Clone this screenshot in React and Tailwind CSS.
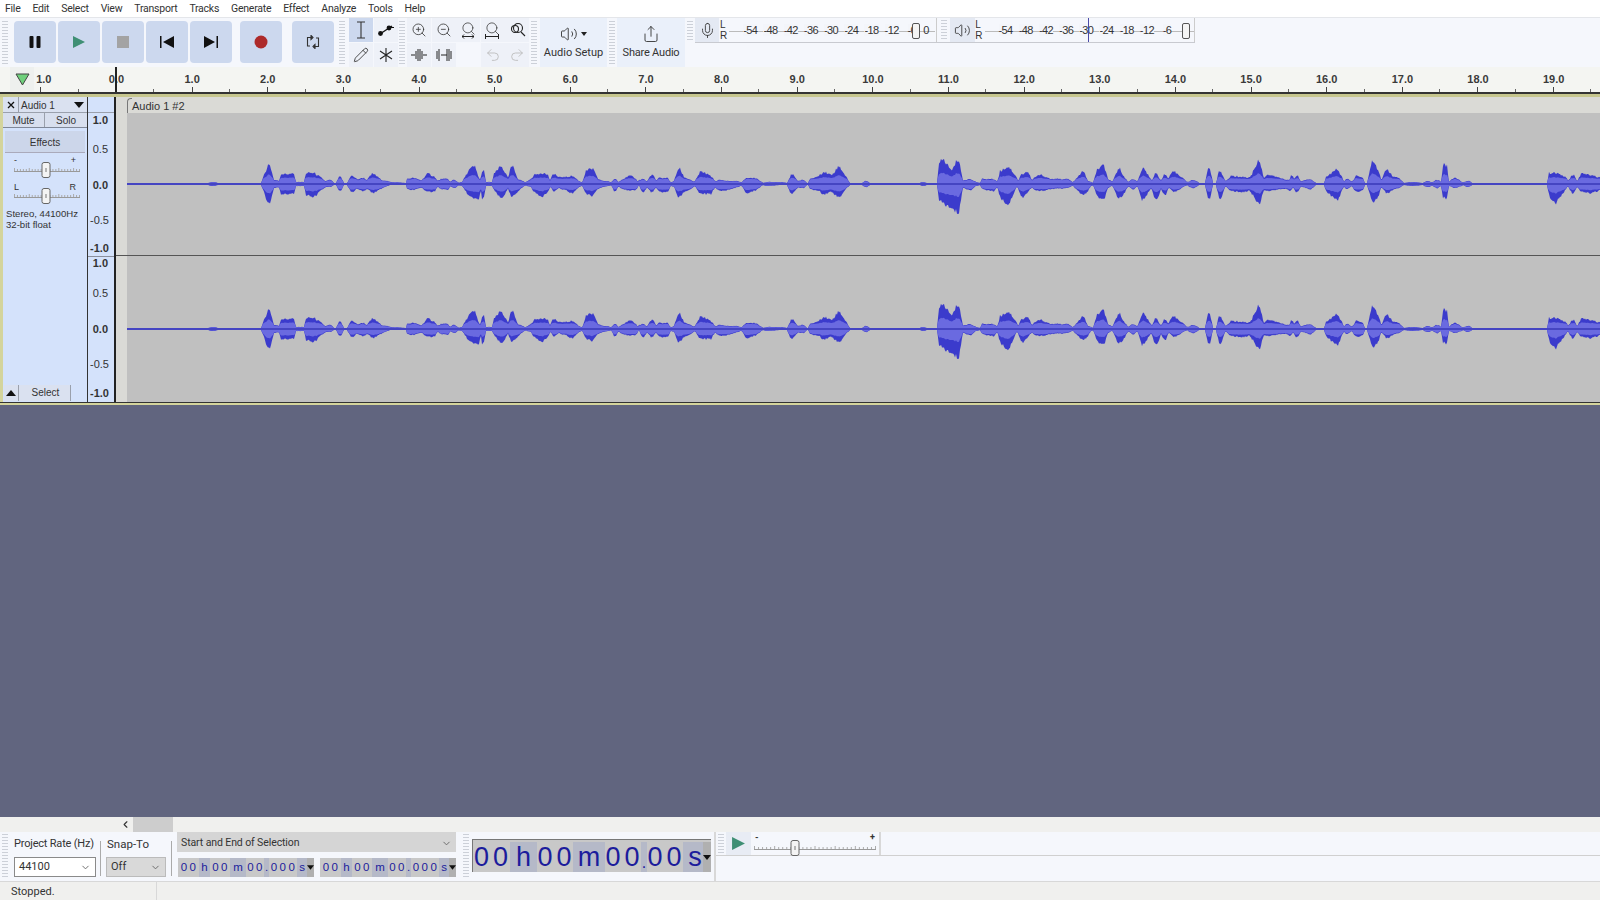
import { Mic, Volume2, Pencil, ZoomIn, ZoomOut, Search, Undo2, Redo2, ChevronDown, ChevronLeft, Share } from 'lucide-react';

const uiFont = "font-['Roboto','Liberation_Sans',sans-serif]";
const armFont = "font-['Liberation_Sans',Arial,sans-serif]";

// envelope of the recording: [x, up, down] in px from the centre line
const ENV = [
  [127,1,1],[208,1,1],[213,2,2],[218,1,1],[262,1,1],[264,6,6],[269,19,19],[273,4,4],[280,3,3],[282,10,10],[293,10,10],[295,2,2],[305,2,2],[307,11,11],[313,11,13],[322,5,5],[325,2,3],[330,4,3],[333,1,1],[337,1,1],[340,7,7],[343,1,1],[348,1,1],[352,8,8],[357,4,4],[363,6,7],[367,3,4],[373,10,9],[378,6,6],[381,4,4],[390,2,1],[407,1,1],[408,5,5],[413,6,6],[422,3,3],[428,10,8],[434,7,7],[437,2,2],[442,5,5],[447,5,6],[450,1,1],[454,4,4],[458,1,1],[463,2,2],[470,14,12],[474,17,15],[478,6,15],[481,1,1],[483,13,14],[485,2,2],[493,2,2],[495,10,6],[501,17,14],[506,8,7],[508,2,2],[512,17,13],[517,5,7],[522,3,3],[525,1,1],[532,5,3],[535,9,8],[542,11,12],[547,9,8],[550,1,1],[554,10,7],[558,6,4],[562,7,5],[567,7,6],[572,8,9],[578,3,3],[583,1,1],[587,13,10],[592,15,12],[597,5,5],[602,3,3],[607,3,2],[612,1,1],[615,5,7],[618,1,1],[622,4,4],[630,8,7],[635,5,6],[638,1,1],
  [640,4,1],[643,5,8],[647,1,2],[652,9,8],[656,2,2],[660,6,8],[667,6,8],[670,1,1],[675,3,3],[679,15,13],[683,7,8],[690,4,5],[695,1,1],[701,12,10],[710,8,10],[715,2,2],[720,4,7],[727,3,6],[737,3,3],[742,1,1],[747,6,9],[755,6,6],[762,1,1],[768,2,2],[780,2,1],[788,1,1],[792,9,10],[797,3,3],[803,4,4],[806,1,1],[809,1,1],[811,5,5],[820,8,7],[824,12,10],[832,8,7],[839,17,13],[844,9,6],[849,1,1],[863,1,1],[866,3,3],[869,1,1],[920,1,1],[923,2,2],[927,1,1],[938,1,1],[940,20,17],[943,24,18],[952,11,25],[958,24,28],[962,3,3],
  [970,5,6],[975,2,2],[981,1,1],[983,5,5],[993,5,7],[998,1,1],[1001,13,13],[1008,17,20],[1015,8,4],[1018,1,1],[1022,9,13],[1027,12,8],[1032,2,2],[1035,6,6],[1040,9,7],[1050,5,5],[1067,5,4],[1073,1,1],[1078,6,6],[1083,12,11],[1087,3,7],[1090,2,2],[1094,1,1],[1098,14,12],[1103,18,16],[1107,5,4],[1113,1,1],[1119,15,14],[1124,6,8],[1128,1,1],[1133,5,5],[1138,1,1],[1143,15,16],[1148,8,7],[1152,2,2],[1156,10,16],[1161,2,2],[1165,9,11],[1168,4,2],[1174,12,8],[1182,6,3],[1187,1,1],[1193,4,4],[1199,1,1],[1206,1,1],[1209,16,14],[1212,1,1],[1217,1,1],[1220,13,14],[1225,1,1],[1232,8,7],[1243,7,8],[1250,6,6],[1253,10,10],[1259,23,19],
  [1263,5,5],[1268,9,7],[1287,4,4],[1290,3,7],[1292,8,3],[1293,2,2],[1297,8,8],[1300,2,2],[1310,5,5],[1315,1,1],[1325,1,1],[1327,7,7],[1337,14,16],[1342,5,4],[1344,1,1],[1347,5,5],[1352,1,1],[1357,8,8],[1362,6,6],[1364,1,1],[1368,1,1],[1373,22,18],[1378,12,11],[1381,1,1],[1387,14,9],[1392,7,6],[1398,6,4],[1403,1,1],[1413,2,2],[1423,1,1],[1428,3,3],[1432,1,1],[1437,4,4],[1442,1,1],[1444,19,14],[1446,19,14],[1448,1,1],[1455,6,4],[1463,1,1],[1468,3,3],[1472,1,1],[1548,1,1],[1550,11,11],[1555,11,19],[1565,7,5],[1568,1,1],[1573,9,9],[1577,1,1],[1582,10,8],[1590,9,9],[1600,6,6],
];

// resample to 1px columns, widen each blob a little and roughen the edge
const sampleEnv = () => {
  const raw = [];
  let k = 0;
  for (let x = 127; x <= 1600; x++) {
    while (k < ENV.length - 2 && ENV[k + 1][0] < x) k++;
    const [x0, u0, d0] = ENV[k];
    const [x1, u1, d1] = ENV[k + 1];
    const t = Math.min(1, Math.max(0, (x - x0) / (x1 - x0)));
    raw.push([x, u0 + (u1 - u0) * t, d0 + (d1 - d0) * t]);
  }
  return raw.map(([x, u, d], i) => {
    const win = raw.slice(Math.max(0, i - 1), i + 2);
    const maxU = Math.max(...win.map((p) => p[1]));
    const maxD = Math.max(...win.map((p) => p[2]));
    const n = Math.sin(x * 12.9898) * 43758.5453;
    const noise = 1 + ((n - Math.floor(n)) - 0.5) * 0.22;
    return [x, maxU > 1.5 ? maxU * noise : u, maxD > 1.5 ? maxD * (2 - noise) : d];
  });
};

const COLS = sampleEnv();
const rms = (a) => Math.min(a * 0.85, 3 + a * 0.33);
const toPoints = (f) =>
  COLS.map(([x, u]) => `${x},${(-f(u)).toFixed(1)}`).concat(COLS.slice().reverse().map(([x, , d]) => `${x},${f(d).toFixed(1)}`)).join(' ');

const Wave = () => (
  <svg width="1473" height="60" viewBox="127 -30 1473 60" className="block overflow-visible shrink-0">
    <polygon points={toPoints((a) => a)} fill="#3b3bcc" />
    <polygon points={toPoints(rms)} fill="#6a6ae0" />
    <rect x="127" y="-1" width="1473" height="2" fill="#4545c2" />
  </svg>
);

const Grip = ({ className = '' }) => (
  <div className={`w-[6px] bg-[repeating-linear-gradient(to_bottom,#ccd0d8_0,#ccd0d8_1px,transparent_1px,transparent_3px)] ${className}`} />
);

const TransportBtn = ({ children, className = '' }) => (
  <div className={`w-[42px] h-[42px] rounded-[4px] bg-[#ccd8ee] flex items-center justify-center ${className}`}>{children}</div>
);

const ToolBtn = ({ children, active }) => (
  <div className={`w-[24px] h-[24px] flex items-center justify-center text-[#333] ${active ? 'bg-[#ccd8ee]' : 'bg-[#eef1f8]'}`}>{children}</div>
);

const Slider = ({ width = 66, thumb, ticks = 22, thumbH = 16 }) => {
  const items = [];
  for (let i = 0; i <= ticks; i++) {
    const x = 0.5 + (i * (width - 1)) / ticks;
    items.push(<line key={i} x1={x} x2={x} y1={i % 5 === 0 ? 6 : 7} y2="9" stroke="#aaa" />);
  }
  return (
    <svg width={width} height={thumbH} viewBox={`0 0 ${width} ${thumbH}`} className="block">
      {items}
      <line x1="0" x2={width} y1="9.5" y2="9.5" stroke="#999" />
      <rect x={thumb - 4} y="0.5" width="8" height={thumbH - 1} rx="2" fill="#f4f4f4" stroke="#666" />
      <line x1={thumb} x2={thumb} y1="6" y2="10" stroke="#777" />
    </svg>
  );
};

const Meter = ({ labels, className = '', thumbClass, children }) => (
  <div className={`relative h-full flex items-center ${className}`}>
    <div className="absolute left-0 right-0 top-[13px] h-px bg-[#bbb]" />
    <div className={`${armFont} relative flex text-[11px] tracking-[-0.6px] text-[#333]`}>
      {labels.map((l, i) => (
        <span key={i} className="w-[20.2px] text-center leading-[12px]">
          <span className="bg-[#f3f5fa]">{l}</span>
        </span>
      ))}
    </div>
    {children}
    <div className={`absolute top-[5px] w-[8px] h-[16px] rounded-[2px] border border-[#555] bg-[#f4f4f4] ${thumbClass}`} />
  </div>
);

const LR = () => (
  <div className={`${armFont} flex flex-col text-[10px] leading-[11px] text-[#333] pt-px`}>
    <span>L</span>
    <span>R</span>
  </div>
);

const RulerCell = ({ label, labelClass = '' }) => (
  <div className="relative w-[75.65px] h-full flex flex-col items-center shrink-0">
    <span className={`mt-[5px] text-[11px] leading-[14px] font-bold text-[#3a3a3a] ${labelClass}`}>{label}</span>
    <div className="mt-auto w-px h-[5px] bg-[#444]" />
    <div className="absolute right-0 bottom-0 w-px h-[3px] bg-[#666]" />
  </div>
);

const Seg = ({ children, className = '' }) => (
  <div className={`h-full flex items-center justify-center ${className}`}>{children}</div>
);

const SmallTime = () => (
  <div className={`${armFont} flex w-[136px] h-[19px] text-[11.5px] tracking-[2.4px] text-[#1c1c9c] bg-[#c8c8c8]`}>
    <Seg className="w-[21px] pl-[2px]">00</Seg>
    <Seg className="w-[11px] bg-[#b5b9c8] tracking-normal">h</Seg>
    <Seg className="w-[20px] pl-[2px]">00</Seg>
    <Seg className="w-[16px] bg-[#b5b9c8] tracking-normal">m</Seg>
    <Seg className="w-[18px] pl-[2px]">00</Seg>
    <Seg className="w-[5px] bg-[#b5b9c8] tracking-normal">.</Seg>
    <Seg className="w-[28px] pl-[2px]">000</Seg>
    <Seg className="w-[10px] bg-[#b5b9c8] tracking-normal">s</Seg>
    <Seg className="flex-1 bg-[#b0b0b0]">
      <svg width="7" height="5" viewBox="0 0 8 5"><path d="M0 0h8L4 5z" fill="#111" /></svg>
    </Seg>
  </div>
);

export default function App() {
  const rulerLabels = ['1.0', '0.0', '1.0', '2.0', '3.0', '4.0', '5.0', '6.0', '7.0', '8.0', '9.0', '10.0', '11.0', '12.0', '13.0', '14.0', '15.0', '16.0', '17.0', '18.0', '19.0', ''];
  const menus = ['File', 'Edit', 'Select', 'View', 'Transport', 'Tracks', 'Generate', 'Effect', 'Analyze', 'Tools', 'Help'];

  return (
    <div className={`${uiFont} w-[1600px] h-screen flex flex-col overflow-hidden bg-[#61657f] text-[#222]`}>
      {/* menu */}
      <div className="h-[17px] bg-white flex items-center pl-[5px] gap-[12px] text-[10.5px] tracking-[-0.25px] text-[#333] shrink-0">
        {menus.map((m) => <span key={m}>{m}</span>)}
      </div>

      {/* toolbars */}
      <div className="h-[50px] bg-[#f5f7fc] flex shrink-0 border-t border-[#e4e6ea]">
        <Grip className="ml-[2px] my-[3px]" />
        <div className="ml-[6px] mt-[3px] flex gap-[2px]">
          <TransportBtn>
            <svg width="12" height="12" viewBox="0 0 12 12"><rect x="0.5" width="4" height="12" rx="1" fill="#111" /><rect x="7.5" width="4" height="12" rx="1" fill="#111" /></svg>
          </TransportBtn>
          <TransportBtn>
            <svg width="14" height="14" viewBox="0 0 14 14"><path d="M1 1l12 6-12 6z" fill="#3f8f74" /></svg>
          </TransportBtn>
          <TransportBtn>
            <svg width="12" height="12" viewBox="0 0 12 12"><rect width="12" height="12" fill="#a3a3a3" /></svg>
          </TransportBtn>
          <TransportBtn>
            <svg width="14" height="12" viewBox="0 0 14 12"><rect width="1.5" height="12" fill="#111" /><path d="M14 0v12L3 6z" fill="#111" /></svg>
          </TransportBtn>
          <TransportBtn>
            <svg width="14" height="12" viewBox="0 0 14 12"><rect x="12.5" width="1.5" height="12" fill="#111" /><path d="M0 0v12l11-6z" fill="#111" /></svg>
          </TransportBtn>
        </div>
        <TransportBtn className="ml-[8px] mt-[3px]">
          <svg width="14" height="14" viewBox="0 0 14 14"><circle cx="7" cy="7" r="6.5" fill="#ad2a2a" /></svg>
        </TransportBtn>
        <TransportBtn className="ml-[10px] mt-[3px]">
          <svg width="14" height="14" viewBox="0 0 14 14" fill="none" stroke="#333" strokeWidth="1.1"><path d="M6 2.5H1.5v8.5H4" /><path d="M8 11.5h4.5V3H10" /><path d="M5 .5l2 2-2 2z" fill="#333" /><path d="M9 9.5l-2 2 2 2z" fill="#333" /></svg>
        </TransportBtn>

        <Grip className="ml-[5px] my-[3px]" />
        <div className="ml-[4px] grid grid-cols-2 gap-px self-start">
          <ToolBtn active>
            <svg width="10" height="18" viewBox="0 0 10 18" fill="none" stroke="#333" strokeWidth="1.1"><path d="M1 1h8M5 1v16M1 17h8" /></svg>
          </ToolBtn>
          <ToolBtn>
            <svg width="18" height="14" viewBox="0 0 18 14"><path d="M3 11L15 3" stroke="#111" strokeWidth="1.4" /><circle cx="3.5" cy="10.5" r="2.4" fill="#111" /><circle cx="12" cy="5" r="2.4" fill="#111" /><path d="M14 4.5h3" stroke="#111" /></svg>
          </ToolBtn>
          <ToolBtn><Pencil size={16} strokeWidth={1.3} /></ToolBtn>
          <ToolBtn>
            <svg width="16" height="16" viewBox="0 0 16 16" stroke="#222" strokeWidth="1.1"><path d="M8 1v14M2 4l12 8M14 4L2 12" /></svg>
          </ToolBtn>
        </div>

        <Grip className="ml-[1px] my-[3px]" />
        <div className="ml-[2px] grid grid-cols-5 self-start gap-y-px gap-x-[0.5px]">
          <ToolBtn><ZoomIn size={16} strokeWidth={1.2} /></ToolBtn>
          <ToolBtn><ZoomOut size={16} strokeWidth={1.2} /></ToolBtn>
          <ToolBtn>
            <div className="relative -mt-[3px]"><Search size={15} strokeWidth={1.2} /><svg width="12" height="5" viewBox="0 0 12 5" className="absolute -bottom-[3px] left-[1px]" stroke="#222"><path d="M0 2.5h12M2 .5L0 2.5l2 2M10 .5l2 2-2 2" fill="none" /></svg></div>
          </ToolBtn>
          <ToolBtn>
            <div className="relative -mt-[3px]"><Search size={15} strokeWidth={1.2} /><svg width="14" height="5" viewBox="0 0 14 5" className="absolute -bottom-[3px] left-0" stroke="#222"><path d="M0 2.5h14M.5 0v5M13.5 0v5" fill="none" /></svg></div>
          </ToolBtn>
          <ToolBtn>
            <svg width="17" height="17" viewBox="0 0 17 17" fill="none" stroke="#222" strokeWidth="1.1"><circle cx="9" cy="6" r="4.5" /><circle cx="6" cy="7" r="3.5" /><path d="M12 10l4 4" /></svg>
          </ToolBtn>
          <ToolBtn>
            <svg width="16" height="12" viewBox="0 0 16 12" fill="none" stroke="#222"><path d="M0 6h4M12 6h4M5 2v8M7 0v12M9 0v12M11 2v8" /></svg>
          </ToolBtn>
          <ToolBtn>
            <svg width="16" height="12" viewBox="0 0 16 12" fill="none" stroke="#222"><path d="M1 2v8M3 0v12M5 6h6M11 0v12M13 0v12M15 2v8" /></svg>
          </ToolBtn>
          <div />
          <ToolBtn><Undo2 size={16} strokeWidth={1.3} className="text-[#bbb]" /></ToolBtn>
          <ToolBtn><Redo2 size={16} strokeWidth={1.3} className="text-[#bbb]" /></ToolBtn>
        </div>

        <Grip className="ml-[2px] my-[3px]" />
        <div className="ml-[3px] w-[67px] bg-[#eaf0fa] flex flex-col items-center">
          <div className="h-[28px] flex items-center gap-[3px] pt-[3px]">
            <Volume2 size={18} strokeWidth={1.2} className="text-[#333]" />
            <svg width="6" height="4" viewBox="0 0 6 4"><path d="M0 0h6L3 4z" fill="#222" /></svg>
          </div>
          <span className="text-[11px] leading-[14px] text-[#333]">Audio Setup</span>
        </div>
        <Grip className="ml-[2px] my-[3px]" />
        <div className="ml-[2px] w-[68px] bg-[#eaf0fa] flex flex-col items-center">
          <div className="h-[28px] flex items-center pt-[3px]"><Share size={18} strokeWidth={1.2} className="text-[#333]" /></div>
          <span className="text-[11px] tracking-[-0.2px] leading-[14px] text-[#333]">Share Audio</span>
        </div>
        <Grip className="ml-[2px] mb-[27px] mt-[3px]" />

        {/* level meters */}
        <div className="ml-[2px] h-[25px] flex border-b border-[#c8cad0]">
          <div className="w-[24px] bg-[#e4e9f3] flex items-center justify-center"><Mic size={17} strokeWidth={1.2} className="text-[#333]" /></div>
          <div className="ml-[1px]"><LR /></div>
          <Meter
            className="ml-[2px] w-[206px] pl-[11px]"
            labels={['-54', '-48', '-42', '-36', '-30', '-24', '-18', '-12', '-6']}
            thumbClass="left-[183px]"
          >
            <span className={`${armFont} absolute left-[193px] w-[8px] text-center text-[11px] leading-[12px] text-[#333]`}>0</span>
          </Meter>
          <div className="w-px bg-[#ccc] ml-[1px]" />
          <Grip className="ml-[4px] my-[2px]" />
          <div className="ml-[3px] w-[25px] bg-[#e4e9f3] flex items-center justify-center"><Volume2 size={17} strokeWidth={1.2} className="text-[#333]" /></div>
          <div className="ml-0"><LR /></div>
          <div className="relative">
            <Meter
              className="ml-[3px] w-[209px] pl-[10px]"
              labels={['-54', '-48', '-42', '-36', '-30', '-24', '-18', '-12', '-6']}
              thumbClass="left-[197px]"
            />
            <div className="absolute left-[106px] top-0 h-full w-px bg-[#4a4aa8]" />
          </div>
          <div className="w-px bg-[#ccc]" />
        </div>
      </div>

      {/* timeline */}
      <div className={`${armFont} relative h-[25px] bg-[#f4f5f2] flex pl-[3px] overflow-hidden shrink-0`}>
        {rulerLabels.map((l, i) => <RulerCell key={i} label={l} labelClass={i === 0 ? 'ml-[6px]' : ''} />)}
        <div className="absolute left-[10px] top-0 w-[24px] h-[24px] bg-[#eef0ee] flex items-center justify-center">
          <svg width="15" height="13" viewBox="0 0 15 13"><path d="M1 1h13L7.5 12z" fill="#6fd07c" stroke="#444" /></svg>
        </div>
        <div className="absolute left-[115px] top-0 bottom-0 w-[1.5px] bg-[#222]" />
      </div>
      <div className="h-[2px] bg-[#333] shrink-0" />
      <div className="h-[3px] bg-[#c6c68e] shrink-0" />

      {/* track */}
      <div className={`${armFont} h-[305px] flex border-l-[3px] border-[#d4d49c] shrink-0`}>
        <div className="w-[85px] bg-[#d4e2fb] border-r border-[#333] flex flex-col text-[#333]">
          <div className="h-[16px] flex bg-[#dae1f0] border-b border-[#9aa0ac]">
            <div className="w-[16px] flex items-center justify-center text-[#111] border-r border-[#9aa0ac]">
              <svg width="8" height="8" viewBox="0 0 8 8" stroke="#111" strokeWidth="1.3"><path d="M1 1l6 6M7 1L1 7" /></svg>
            </div>
            <span className="ml-[2px] text-[10px] leading-[17px]">Audio 1</span>
            <svg width="10" height="6" viewBox="0 0 10 6" className="ml-auto mr-[3px] mt-[5px]"><path d="M0 0h10L5 6z" fill="#111" /></svg>
          </div>
          <div className="h-[15px] flex bg-[#d8dfee] border-b border-[#808898] text-[10px] leading-[16px] text-center">
            <div className="w-[42px] border-r border-[#9aa0ac]">Mute</div>
            <div className="flex-1">Solo</div>
          </div>
          <div className="mx-[2px] mt-[3px] w-[80px] h-[22px] bg-[#ccd6ea] border-b border-[#aab] text-[10px] leading-[23px] text-center shrink-0">Effects</div>

          <div className="mt-[2px] px-[11px] flex justify-between text-[9px] leading-[10px]"><span>-</span><span>+</span></div>
          <div className="mx-[11px] -mt-[3px]"><Slider thumb={32} /></div>
          <div className="mt-[4px] px-[11px] flex justify-between text-[9px] leading-[10px]"><span>L</span><span>R</span></div>
          <div className="mx-[11px] -mt-[4px]"><Slider thumb={32} /></div>

          <div className="ml-[3px] mt-[5px] text-[9.6px] leading-[10.5px]">
            <div>Stereo, 44100Hz</div>
            <div>32-bit float</div>
          </div>

          <div className="mt-auto mb-[1px] ml-px flex h-[16px] text-[10px] leading-[15px]">
            <div className="w-[15px] bg-[#dae1f0] border-r border-[#9aa0ac] flex items-center justify-center">
              <svg width="10" height="6" viewBox="0 0 10 6"><path d="M5 0l5 6H0z" fill="#111" /></svg>
            </div>
            <div className="w-[52px] bg-[#dae1f0] text-center border-r border-[#9aa0ac] pl-[2px]">Select</div>
          </div>
        </div>

        <div className="w-[28px] bg-[#d4e2fb] border-r-2 border-[#222] flex flex-col text-[11px] leading-[14px] text-[#333] text-right pr-[6px]">
          <div className="h-[16px] border-b border-[#9aa0ac] -mr-[6px] shrink-0" />
          <span className="font-bold">1.0</span>
          <span className="mt-[15px]">0.5</span>
          <span className="mt-[22px] font-bold">0.0</span>
          <span className="mt-[21px] -mr-px">-0.5</span>
          <span className="mt-[14px] font-bold -mr-px">-1.0</span>
          <div className="h-px mt-auto shrink-0 bg-[#8a8f9c] -mr-[6px]" />
          <span className="-mt-px font-bold">1.0</span>
          <span className="mt-[16px]">0.5</span>
          <span className="mt-[22px] font-bold">0.0</span>
          <span className="mt-[21px] -mr-px">-0.5</span>
          <span className="mt-[15px] font-bold -mr-px">-1.0</span>
          <div className="h-[2px] shrink-0" />
        </div>

        <div className="flex-1 min-w-0 flex flex-col">
          <div className="h-[16px] bg-[#dadad6] flex shrink-0">
            <div className="w-[11px]" />
            <div className="w-[5px] h-[15px] mt-px border-l border-t border-[#777] rounded-tl-[4px]" />
            <span className="text-[11px] leading-[18px] text-[#333]">Audio 1 #2</span>
          </div>
          <div className="h-[142px] flex shrink-0">
            <div className="w-[11px] bg-[#dadad6]" />
            <div className="flex-1 bg-[#c0c0c0] flex items-center overflow-hidden"><Wave /></div>
          </div>
          <div className="h-px bg-[#555] shrink-0" />
          <div className="flex-1 flex">
            <div className="w-[11px] bg-[#dadad6]" />
            <div className="flex-1 bg-[#c0c0c0] flex items-center overflow-hidden"><Wave /></div>
          </div>
        </div>
      </div>
      <div className="h-px bg-[#333] shrink-0" />
      <div className="h-[2px] bg-[#d4d49c] shrink-0" />

      {/* project area */}
      <div className="flex-1" />

      {/* scrollbar */}
      <div className="h-[15px] bg-[#f0f0ee] flex items-center shrink-0">
        <ChevronLeft size={11} strokeWidth={2.5} className="ml-[120px] text-[#333]" />
        <div className="ml-[2px] w-[40px] h-full bg-[#cdcdcd]" />
      </div>

      {/* selection toolbar */}
      <div className="h-[50px] bg-[#f5f7fc] flex shrink-0 border-b border-[#d8d8d8] text-[#333]">
        <Grip className="ml-[2px] my-[2px]" />
        <div className="ml-[6px] w-[82px] flex flex-col">
          <span className="h-[25px] text-[11px] tracking-[-0.2px] leading-[24px] whitespace-nowrap">Project Rate (Hz)</span>
          <div className="h-[20px] bg-white border border-[#8a8a8a] flex items-center pl-[4px] pr-[4px] text-[11px]">
            44100<ChevronDown size={11} className="ml-auto text-[#666]" />
          </div>
        </div>
        <div className="ml-[4px] mt-[9px] mb-[5px] w-px bg-[#aaa]" />
        <div className="ml-[5px] w-[60px] flex flex-col">
          <span className="h-[25px] text-[11.5px] leading-[24px] pl-px">Snap-To</span>
          <div className="h-[20px] bg-[#d9d9d9] border border-[#bbb] flex items-center pl-[4px] pr-[4px] text-[11px]">
            Off<ChevronDown size={11} className="ml-auto text-[#666]" />
          </div>
        </div>
        <div className="ml-[5px] mt-[9px] mb-[5px] w-px bg-[#aaa]" />
        <div className="ml-[5px] w-[279px] flex flex-col">
          <div className="h-[20px] bg-[#d5d5d5] flex items-center pl-[4px] pr-[4px] pt-[2px] text-[10.5px] tracking-[-0.1px]">
            Start and End of Selection<ChevronDown size={11} className="ml-auto text-[#666]" />
          </div>
          <div className="mt-[6px] flex justify-between pl-px">
            <SmallTime />
            <SmallTime />
          </div>
        </div>
        <Grip className="ml-[7px] my-[2px]" />
        <div className={`${armFont} ml-[3px] mt-[7px] pt-[2px] w-[239px] h-[33px] flex border-l border-t border-[#777] bg-[#c8c8c8] text-[27px] text-[#1c1c9c]`}>
          <Seg className="w-[37px] pl-[3px] tracking-[4px]">00</Seg>
          <Seg className="w-[27px] bg-[#b5b9c8]">h</Seg>
          <Seg className="w-[36px] pl-[3px] tracking-[4px]">00</Seg>
          <Seg className="w-[32px] bg-[#b5b9c8]">m</Seg>
          <Seg className="w-[36px] pl-[3px] tracking-[4px]">00</Seg>
          <div className="w-[6px] h-full bg-[#b5b9c8] flex items-end justify-center pb-[3px] text-[16px] leading-[12px]">.</div>
          <Seg className="w-[36px] pl-[3px] tracking-[4px]">00</Seg>
          <Seg className="w-[20px] bg-[#b5b9c8] pl-[4px]">s</Seg>
          <Seg className="flex-1 bg-[#b0b0b0] pt-px">
            <svg width="8" height="5" viewBox="0 0 8 5"><path d="M0 0h8L4 5z" fill="#111" /></svg>
          </Seg>
        </div>
        <div className="ml-[3px] w-[2px] bg-[#d8d8d8]" />
        <div className="flex-1 h-[24px] flex border-b border-[#d0d0d0]">
          <Grip className="ml-[2px] my-[2px]" />
          <div className="ml-[2px] w-[25px] bg-[#e8ecf4] flex items-center justify-center">
            <svg width="15" height="15" viewBox="0 0 14 14"><path d="M1 1l12 6-12 6z" fill="#3f8f74" /></svg>
          </div>
          <div className="ml-[3px] w-[122px] flex flex-col">
            <div className="flex justify-between px-px text-[9px] leading-[8px] font-bold mt-[1px]"><span>-</span><span>+</span></div>
            <div className="-mt-[1px]"><Slider width={122} thumb={41} ticks={30} /></div>
          </div>
          <div className="ml-[3px] w-[2px] bg-[#d8d8d8]" />
        </div>
      </div>

      {/* status */}
      <div className="h-[18px] bg-[#f0f0ee] flex items-center text-[11px] text-[#333] shrink-0">
        <div className="w-[157px] h-full pl-[11px] border-r border-[#d8d8d8] leading-[19px]">Stopped.</div>
      </div>
    </div>
  );
}
